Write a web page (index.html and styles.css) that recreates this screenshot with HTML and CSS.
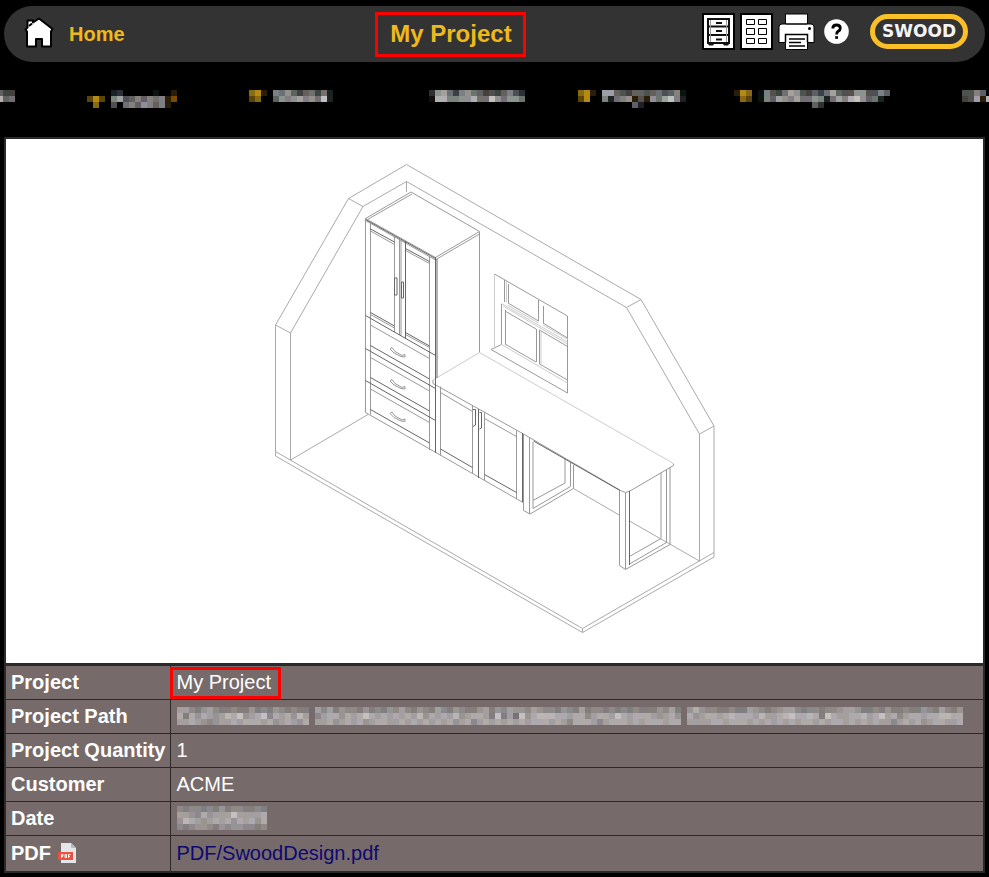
FILE: index.html
```html
<!DOCTYPE html>
<html lang="en">
<head>
<meta charset="utf-8">
<meta name="viewport" content="width=device-width, initial-scale=1">
<title>My Project</title>
<link rel="stylesheet" href="styles.css">
</head>
<body>
<header class="topbar">
  <a class="home" href="#">
    <svg class="home-icon" viewBox="0 0 30 31" aria-hidden="true">
      <path d="M3 29.500V14.500L1.500 12.500 3.500 10.500V3.500H9V5.500L15 1.500 28.500 12 27 14.500V29.500H18V22H12V29.500Z" fill="#fff" stroke="#000" stroke-width="2" stroke-linejoin="round"/>
      <path d="M5 9L8 6.500" stroke="#000" stroke-width="2"/>
    </svg>
    <span>Home</span>
  </a>
  <h1 class="title">My Project</h1>
  <div class="tools">
    <button class="tool" type="button" aria-label="Cabinets">
      <svg width="33" height="37" viewBox="0 0 33 37">
        <rect x="1" y="1" width="31" height="35" fill="#fff" stroke="#000" stroke-width="2"/>
        <rect x="6" y="6" width="21" height="24" fill="#fff" stroke="#111" stroke-width="2"/>
        <path d="M6 13.500H27M6 22H27" stroke="#111" stroke-width="2"/>
        <path d="M14 10H20M14 18H20M14 26.500H20" stroke="#111" stroke-width="2"/>
        <path d="M8.500 7V29M24.500 7V29" stroke="#999"/>
        <path d="M6 29H27V31L26 32.500H22L21 31H12L11 32.500H7L6 31Z" fill="#111"/>
      </svg>
    </button>
    <button class="tool" type="button" aria-label="Grid">
      <svg width="33" height="37" viewBox="0 0 33 37">
        <rect x="1" y="1" width="31" height="35" fill="#fff" stroke="#000" stroke-width="2"/>
        <path d="M6.500 6.500h8v5h-8zM18.500 6.500h8v5h-8zM6.500 15.500h8v6h-8zM18.500 15.500h8v6h-8zM6.500 25.500h8v5h-8zM18.500 25.500h8v5h-8z" fill="#fff" stroke="#000"/>
      </svg>
    </button>
    <button class="tool" type="button" aria-label="Print">
      <svg width="37" height="37" viewBox="0 0 37 37">
        <path d="M7.500 1H29.500V11H33Q36 11 36 14V29.500H29.500V36.500H7.500V29.500H1V14Q1 11 4 11H7.500Z" fill="#fff" stroke="#000"/>
        <path d="M7.500 11H29.500M7.500 29.500V21.500H29.500V29.500" fill="none" stroke="#000" stroke-width="1.500"/>
        <path d="M11 26H27M11 29.500H23M11 33H27" stroke="#000" stroke-width="1.300"/>
        <circle cx="31.500" cy="15.500" r="1.500"/>
      </svg>
    </button>
    <button class="tool help" type="button" aria-label="Help">
      <svg width="25" height="25" viewBox="0 0 25 25">
        <circle cx="12.500" cy="12.500" r="12.300" fill="#fff"/>
        <path d="M8.800 9.500Q8.800 6 12.500 6 16.300 6 16.300 9.200 16.300 11 14.200 12.300 12.600 13.300 12.600 15.500" fill="none" stroke="#000" stroke-width="2.800"/>
        <rect x="11.200" y="17.200" width="2.800" height="2.600"/>
      </svg>
    </button>
    <a class="brand" href="#">SWOOD</a>
  </div>
</header>

<nav class="menu" aria-label="Sections">
  <a href="#" class="mosaic" data-rows="644|b67"></a>
  <a href="#" class="mosaic" data-rows="....23.....1..d|oYo.8a5686878dB|.y..5.7869868d."></a>
  <a href="#" class="mosaic" data-rows="yYd.8796467472|oy..6989a897c2"></a>
  <a href="#" class="mosaic" data-rows="39a7489764546853|1bb8899b77c97997"></a>
  <a href="#" class="mosaic" data-rows="yYd.aa654665675681|oY..82789d5d97ac82|.........62......."></a>
  <a href="#" class="mosaic" data-rows="dYy.18547a954647a655995586|.yo.186a98a779827a8bc9672|.............63..........."></a>
  <a href="#" class="mosaic" data-rows="55860|45adb"></a>
</nav>

<main class="sheet">
  <figure class="view">
    <svg viewBox="6 139 977 524" role="img" aria-label="Isometric view of the project">
      <g class="wall">
        <path d="M275.500 456V325L348.500 198.500 406.500 164.500 641 299.500 714 426V557L582.500 632.500 275.500 456"/>
        <path d="M290.500 460V333L363 206.500 406.500 181.500 626.500 307.500 699.500 434V561M275.500 325L290.500 333M348.500 198.500L363 206.500M641 299.500L626.500 307.500M714 426L699.500 434"/>
        <path d="M275.500 451.500L582.500 628.500 714 552.500M582.500 628.500V632.500M290.500 460L368 414.500M406.500 181.500V192M573.500 488.500L620 515.500M629.500 521L699.500 561"/>
      </g>
      <g class="edge">
        <path d="M365.500 218.500L411 192 479.500 231.500 435.500 257.500ZM367.500 219.500L412 194M436 259.500L479.500 234M365.500 220.500L435.500 260"/>
        <path d="M365.500 218.500V412.500M370.500 223V414.500M394.500 236V332M399.500 239V335M401 240V335.500M429.500 256V450M479.500 232V352.500"/>
        <path d="M370.500 325L429.500 358.500M370.500 357.500L429.500 391M370.500 389L429.500 422.500"/>
        <path d="M370.500 231L394.500 244.500M405.500 250.500L429.500 263.500M370.500 314.500L394.500 328M405.500 334.500L429.500 347.500"/>
        <path d="M365.500 412.500L435 452 523 502.500M440.500 386.500V455.500M472.500 405V474M484.500 412V481M440.500 392.500L472.500 411.500M484.500 418.500L516.500 436.500M516.500 430.500V499"/>
        <path d="M523.500 434V510.500L530 514 573.500 488.500V465M529.500 438V514M533 442V508.500L570.500 486.500V462M533 500.500L565 483V458"/>
        <path d="M619.500 491V565.500L625.500 569.500 670 544.500V467M625.500 493V569M629.500 564L666.500 542.500V469M629.500 556.500L661 538.500V473"/>
        <path d="M433 380V383.500L523.500 434 621.500 491Q625.500 494 630 491L673.500 465.500V463.500"/>
        <path d="M494.500 274L567.500 316V393L491 349.500 501.500 344.500V304M504.500 280V302M508.500 284V303M538.500 300V321M543.500 306V323"/>
        <path d="M508 303L538.500 321M543 323L567.500 338M505 311L536 329M505 344L536 362M539.500 330L567.500 346.500M539.500 364L567.500 380M505.500 310V344M536.500 329V362M539.500 330V364"/>
      </g>
      <g class="faint">
        <path d="M433 380L479.500 352.500 673.500 463.500M494.500 274V348.500M501.500 303.500L567.500 342M503 306L567.500 344M501.500 344.500L567.500 383M506.500 281V302M507.500 305L538.500 323M541 330V364M568 339.500L543 325"/>
      </g>
      <g class="dark">
        <path d="M405.500 241V339M435.500 257V453M437 259V378M478.500 409V478M522.500 433V502M629.500 491V565M533.500 441L620 490.500"/>
        <path d="M370.500 229L394.500 242M405.500 248.500L429.500 261.500M370.500 312.500L394.500 326M405.500 332.500L429.500 346M365.500 315.500L435.500 355.500M365.500 219.500L435.500 258.500"/>
        <path d="M370.500 345.500L429.500 379M365.500 348.500L435.500 388.500M370.500 377.500L429.500 411M365.500 380.500L435.500 420.500M370.500 409.500L429.500 443M440.500 449L472.500 467.500M484.500 474.500L516.500 492.500"/>
        <path d="M397 278H394.500V295H397V278M403.500 282H401.500V298H403.500ZM473 409.500H475.500V425L473 426.500M479.500 412.500H481.500V428L479.500 429"/>
      </g>
      <g class="pulls">
        <path d="M390 349L392 347.500 395 351.500 402 355.500 405 354.500V357L401 356.500 394 353ZM390 381L392 379.500 395 383.500 402 387.500 405 386.500V389L401 388.500 394 385ZM390 413.500L392 412 395 416 402 420 405 419V421.500L401 421 394 417.500Z"/>
      </g>
    </svg>
  </figure>
  <table class="info">
    <tbody>
      <tr><th scope="row">Project</th><td><span class="marked">My Project</span></td></tr>
      <tr><th scope="row">Project Path</th><td><span class="mosaic" data-cols="131" data-gaps="22,84" data-rows="aa879a87787797879878777a8a79887978798a87987a8798779a798a998a9887987a78878787877798a799b98877877a98789aa87887889aa97787977877987a8798789|b7b9ba9acbd9abd8bab9caa8abb9babdbabababac9babac9abba7d7a6d9bcccbbabb8abbadbabbba9ab99b9abbabcbbbacaabcdbbcb7dbaabbcabdab8abbabbccbbab|aaba989aababbbab9aba9bbaab9abab9abbaababababab9ab8abababababbbaba8bbba8abbbababbbabbbaaaabbabbbabababababbababbabababaa8abab9abbaabbaaba"></span></td></tr>
      <tr><th scope="row">Project Quantity</th><td>1</td></tr>
      <tr><th scope="row">Customer</th><td>ACME</td></tr>
      <tr><th scope="row">Date</th><td><span class="mosaic" data-rows="878878797887787|aa98b9aaadaaaab|9cba9abab9bab9b|878998798998878"></span></td></tr>
      <tr><th scope="row">PDF
        <svg class="pdf-icon" width="18" height="20" viewBox="0 0 18 20" aria-hidden="true">
          <path d="M3 0H13L18 5V20H3Z" fill="#e3e7ea"/><path d="M13 0V5H18Z" fill="#b3bcc3"/>
          <rect y="9" width="15" height="8" fill="#f04f3c"/>
          <path d="M3.500 15V11.500H5V13.300H3.500M7 11.500V14.500H8.500V11.500ZM10.500 15V11.500H12.500M10.500 13.300H12" fill="none" stroke="#fff"/>
        </svg></th><td><a class="file" href="#">PDF/SwoodDesign.pdf</a></td></tr>
    </tbody>
  </table>
</main>
<script src="mosaic.js"></script>
</body>
</html>
```
FILE: styles.css
```css
* { box-sizing: border-box; }

body {
  margin: 0;
  padding: 6px 4px 4px;
  background: #000;
  color: #fff;
  font: 20px/24px "Liberation Sans", Arial, sans-serif;
  overflow-x: hidden;
}

.topbar {
  display: grid;
  grid-template-columns: 371fr auto 459fr;
  align-items: center;
  height: 56px;
  border-radius: 28px;
  background: #333;
}

.home {
  display: flex;
  align-items: center;
  gap: 15px;
  padding-left: 20px;
  color: #f0b91b;
  font-weight: bold;
  text-decoration: none;
}

.home-icon { width: 30px; height: 31px; margin-bottom: 4px; }

.title {
  margin: 0;
  padding: 5px 11px 6px 12px;
  border: 3px solid #f00;
  color: #f0b91b;
  font-size: 24px;
  line-height: 28px;
}

.tools {
  display: flex;
  align-items: center;
  justify-content: flex-end;
  gap: 5px;
  padding-right: 17px;
  margin-bottom: 5px;
}

.tool {
  display: block;
  padding: 0;
  border: 0;
  background: none;
  cursor: pointer;
}

.tool svg { display: block; }
.help { margin: 0 16px 0 4px; }

.brand {
  width: 98px;
  height: 35px;
  border: 5px solid #fbbf27;
  border-radius: 18px;
  color: #f4f4f4;
  font: bold 17px/25px "DejaVu Sans", sans-serif;
  text-align: center;
  text-decoration: none;
}

.menu {
  display: grid;
  grid-template-columns: 90fr 162fr 180fr 150fr 156fr 228fr 29fr;
  height: 75px;
  margin: 0 -7px;
  padding-top: 28px;
}

.mosaic { display: block; }
.mosaic svg { display: block; }

.sheet { border: 2px solid #2a2a2a; }

.view {
  margin: 0;
  background: #fff;
  border-bottom: 2px solid #2a2a2a;
}

.view svg { display: block; width: 100%; fill: none; stroke-width: 1; }
.wall { stroke: #aaa; }
.edge { stroke: #999; }
.faint { stroke: #ccc; }
.dark { stroke: #666; }
.pulls { stroke: #999; }

.info {
  width: 100%;
  border-collapse: collapse;
  background: #766b6a;
}

.info th,
.info td {
  height: 34px;
  padding: 3px 4px 5px 5px;
  border-top: 1px solid #2a2a2a;
  text-align: left;
  white-space: nowrap;
}

.info th { width: 164px; }
.info td { width: auto; padding-left: 6px; border-left: 1px solid #2a2a2a; }
.info tr:last-child > * { height: 35px; padding-top: 4px; padding-bottom: 4px; }

.marked {
  display: inline-block;
  margin-left: -1px;
  padding: 0 4px 2px 1px;
  outline: 3px solid #f00;
  outline-offset: 3px;
  line-height: 18px;
}

.info .mosaic svg { margin-bottom: -1px; }
.pdf-icon { margin-left: 1px; vertical-align: -3px; }
.file { color: #0d0872; text-decoration: none; }
```
FILE: mosaic.js
```js
// Draws masked labels as a grid of 6px cells. Hex digits are brightness levels.
const CELL = 6;
const ACCENTS = { Y: "#b38a14", y: "#8a6a10", o: "#5c450c", d: "#2a1e06", B: "#7a4a00" };
const TINTS = [[0, 0, 0], [-6, 0, 6], [6, 0, -4], [-4, 4, 0], [3, -3, 5]];
const WARM_TINTS = [[4, -2, -3], [0, 0, 2], [6, 0, -4], [2, -2, 2], [5, -3, 1]];

function colour(code, seed, accented) {
  if (accented && ACCENTS[code]) return ACCENTS[code];
  const level = accented ? parseInt(code, 16) * 16 : 50 + parseInt(code, 16) * 11;
  const tints = accented ? TINTS : WARM_TINTS;
  return `rgb(${tints[seed % tints.length].map((t) => level + t).join(",")})`;
}

document.querySelectorAll(".mosaic").forEach((node) => {
  const limit = Number(node.dataset.cols) || Infinity;
  const gaps = (node.dataset.gaps || "").split(",").filter(Boolean).map(Number);
  const rows = node.dataset.rows.split("|").map((row) => row.slice(0, limit));
  const accented = node.closest(".menu") !== null;
  const width = Math.max(...rows.map((row) => row.length)) * CELL;
  const cells = rows.flatMap((row, y) => [...row].map((code, x) =>
    code === "." || gaps.includes(x) ? "" : `<rect x="${x * CELL}" y="${y * CELL}" width="${CELL}" height="${CELL}" fill="${colour(code, x * 3 + y * 7 + ((x * x) >> 2), accented)}"/>`
  ));
  node.innerHTML = `<svg width="${width}" height="${rows.length * CELL}" shape-rendering="crispEdges" aria-hidden="true">${cells.join("")}</svg>`;
});
```
